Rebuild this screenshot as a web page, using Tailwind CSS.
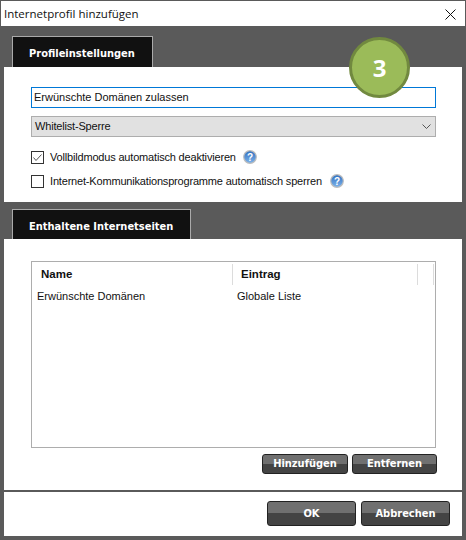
<!DOCTYPE html>
<html lang="de">
<head>
    <meta charset="UTF-8">
    <title>Internetprofil hinzufügen</title>
    <script src="https://cdn.jsdelivr.net/npm/@tailwindcss/browser@4"></script>
</head>
<body class="bg-[#5a5a5a]">
<div class="relative w-[466px] h-[540px] overflow-hidden bg-[#5a5a5a] text-[11px] tracking-[-0.18px] text-[#111] font-['Liberation_Sans',sans-serif]">
    <!-- Title bar -->
    <header class="flex items-center justify-between h-[25px] mt-px mx-px bg-white pl-[3px] pr-[9px] pt-px text-[11.5px] tracking-normal text-[#111] font-['Open_Sans',sans-serif]">
        <span>Internetprofil hinzufügen</span>
        <svg class="w-[11px] h-[11px]" viewBox="0 0 11 11" fill="none" stroke="#111" stroke-width="1"><path d="M0.5 0.5L10.5 10.5M10.5 0.5L0.5 10.5"/></svg>
    </header>

    <!-- Profile settings -->
    <div class="pt-[10px] pl-[12px]">
        <div class="flex items-center w-[141px] h-[31px] pl-[16px] pt-[5px] whitespace-nowrap bg-[#111] border border-b-0 border-[#aaa] text-white text-[11px] tracking-normal font-bold [font-stretch:condensed] font-['DejaVu_Sans',sans-serif]">Profileinstellungen</div>
    </div>
    <section class="w-[458px] h-[135px] ml-[4px] bg-white pt-[20px] px-[27px]">
        <div class="w-[405px] h-[21px] p-px bg-[#0078d7]">
            <div class="flex items-center h-full px-[2px] bg-white tracking-normal">Erwünschte Domänen zulassen</div>
        </div>
        <div class="flex items-center justify-between w-[405px] h-[21px] mt-[8px] pl-[3px] pr-[4px] bg-[#e1e1e1] border border-[#adadad]">
            <span>Whitelist-Sperre</span>
            <svg class="w-[9px] h-[5px]" viewBox="0 0 9 5" fill="none" stroke="#555" stroke-width="1"><path d="M0.5 0.5L4.5 4.5L8.5 0.5"/></svg>
        </div>
        <div class="flex items-center gap-[6px] h-[14px] mt-[13px]">
            <svg class="w-[13px] h-[13px]" viewBox="0 0 13 13" fill="none"><rect x="0.5" y="0.5" width="12" height="12" fill="#fff" stroke="#333"/><path d="M2.5 6.5L5 9.5L10.5 3.5" stroke="#555"/></svg>
            <span>Vollbildmodus automatisch deaktivieren</span>
            <svg class="w-[14px] h-[14px] ml-px" viewBox="0 0 14 14"><defs><linearGradient id="h1" x1="0" y1="0" x2="0" y2="1"><stop offset="0" stop-color="#2f6fc0"/><stop offset="1" stop-color="#7fb4ea"/></linearGradient></defs><circle cx="7" cy="7" r="6.3" fill="url(#h1)" stroke="#bdbdbd" stroke-width="1.2"/><text x="7" y="10.5" text-anchor="middle" font-size="10" font-weight="700" font-family="Liberation Sans" fill="#fff">?</text></svg>
        </div>
        <div class="flex items-center gap-[6px] h-[14px] mt-[10px]">
            <svg class="w-[13px] h-[13px]" viewBox="0 0 13 13" fill="none"><rect x="0.5" y="0.5" width="12" height="12" fill="#fff" stroke="#333"/></svg>
            <span>Internet-Kommunikationsprogramme automatisch sperren</span>
            <svg class="w-[14px] h-[14px] ml-[2px]" viewBox="0 0 14 14"><defs><linearGradient id="h2" x1="0" y1="0" x2="0" y2="1"><stop offset="0" stop-color="#2f6fc0"/><stop offset="1" stop-color="#7fb4ea"/></linearGradient></defs><circle cx="7" cy="7" r="6.3" fill="url(#h2)" stroke="#bdbdbd" stroke-width="1.2"/><text x="7" y="10.5" text-anchor="middle" font-size="10" font-weight="700" font-family="Liberation Sans" fill="#fff">?</text></svg>
        </div>
    </section>

    <!-- Included sites -->
    <div class="pt-[7px] pl-[12px]">
        <div class="flex items-center w-[179px] h-[30px] pl-[16px] pt-[5px] whitespace-nowrap bg-[#111] border border-b-0 border-[#aaa] text-white text-[11px] tracking-normal font-bold [font-stretch:condensed] font-['DejaVu_Sans',sans-serif]">Enthaltene Internetseiten</div>
    </div>
    <section class="w-[458px] h-[251px] ml-[4px] bg-white pt-[22px] px-[27px]">
        <div class="w-[405px] h-[187px] border border-[#adadad] tracking-normal">
            <div class="flex h-[23px] pt-[2px] font-bold text-[11.5px]">
                <div class="flex items-center w-[201px] pl-[9px] border-r border-[#dcdcdc]">Name</div>
                <div class="flex items-center w-[185px] pl-[8px] border-r border-[#dcdcdc]">Eintrag</div>
                <div class="w-[16px] border-r border-[#dcdcdc]"></div>
            </div>
            <div class="flex h-[22px] items-center">
                <div class="w-[205px] pl-[5px]">Erwünschte Domänen</div>
                <div>Globale Liste</div>
            </div>
        </div>
        <div class="flex justify-end gap-[4px] w-[406px] mt-[6px]">
            <button class="w-[86px] h-[20px] pt-px rounded-[3px] border border-[#222] bg-[linear-gradient(#707070_50%,#444_50%)] text-white text-[11px] tracking-normal font-bold [font-stretch:condensed] font-['DejaVu_Sans',sans-serif]">Hinzufügen</button>
            <button class="w-[85px] h-[20px] pt-px rounded-[3px] border border-[#222] bg-[linear-gradient(#707070_50%,#444_50%)] text-white text-[11px] tracking-normal font-bold [font-stretch:condensed] font-['DejaVu_Sans',sans-serif]">Entfernen</button>
        </div>
    </section>

    <!-- Footer -->
    <footer class="flex justify-end gap-[5px] w-[458px] h-[44px] ml-[4px] mt-[2px] bg-white pt-[9px] pr-[12px]">
        <button class="w-[89px] h-[25px] pt-px rounded-[3px] border border-[#222] bg-[linear-gradient(#707070_50%,#444_50%)] text-white text-[11px] tracking-normal font-bold [font-stretch:condensed] font-['DejaVu_Sans',sans-serif]">OK</button>
        <button class="w-[89px] h-[25px] pt-px rounded-[3px] border border-[#222] bg-[linear-gradient(#707070_50%,#444_50%)] text-white text-[11px] tracking-normal font-bold [font-stretch:condensed] font-['DejaVu_Sans',sans-serif]">Abbrechen</button>
    </footer>

    <!-- Step badge -->
    <div class="absolute left-[349px] top-[37px] flex items-center justify-center w-[61px] h-[61px] rounded-full bg-[#9bbb59] border-[3px] border-[#71893f] text-white text-[24px] tracking-normal font-bold font-['Open_Sans',sans-serif]">3</div>
</div>
</body>
</html>
